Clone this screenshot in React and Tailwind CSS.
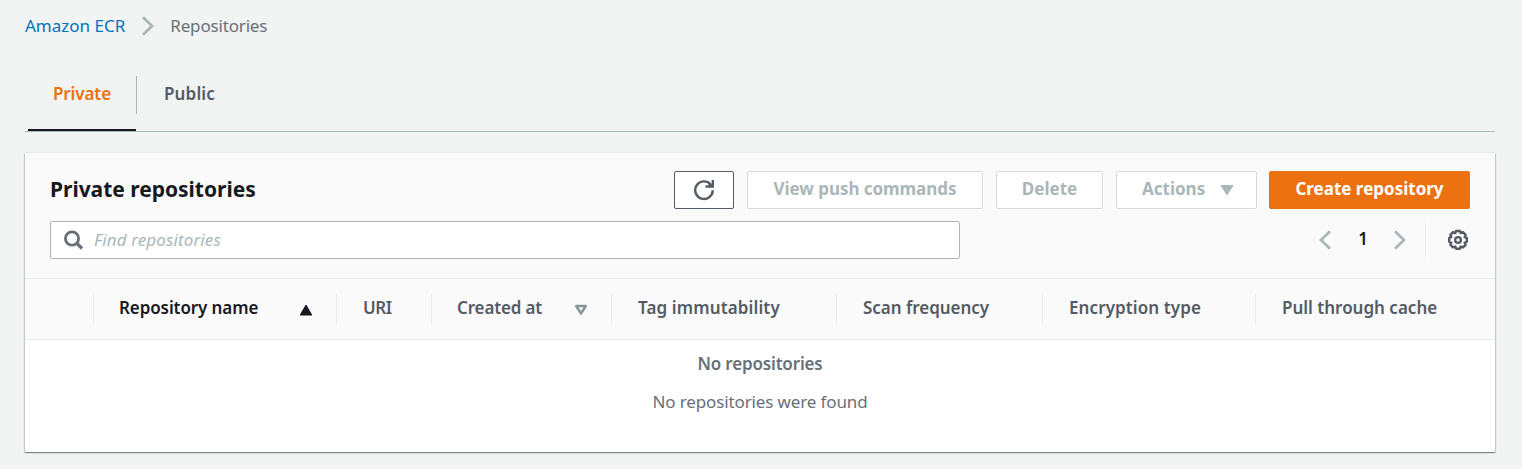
function Chevron({ left = false, className = "" }) {
  return (
    <svg className={className} width="13" height="20" viewBox="0 0 13 20" fill="none" stroke="#aab7b8" strokeWidth="2.7">
      <path d={left ? "M11 1.300 2 10l9 8.700" : "M1 1.300 10 10l-9 8.700"} />
    </svg>
  );
}

function Refresh() {
  return (
    <svg width="22" height="22" viewBox="0 0 22 22" fill="none" stroke="#545b64" strokeWidth="2.4">
      <path d="M19.800 11.300A8.800 8.800 0 1 1 17.500 5.200" />
      <path d="M19.800 1v6.500h-7.300M15.500 4l3.500 3.500" />
    </svg>
  );
}

function Search() {
  return (
    <svg width="20" height="20" viewBox="0 0 20 20" fill="none" stroke="#687078" strokeWidth="2.8">
      <circle cx="8" cy="8.500" r="6.600" />
      <path d="M12.700 13.200l5.300 5.300" strokeWidth="3.300" />
    </svg>
  );
}

function Gear() {
  return (
    <svg width="24" height="24" viewBox="0 0 22 22" fill="none" stroke="#545b64" strokeWidth="2.200" strokeLinejoin="round">
      <path d="M9.200 2.700h3.600l.7 2 2-.9 2.500 2.500-.9 2 2 .7v3.600l-2 .8.9 2-2.500 2.400-2-.8-.7 2H9.200l-.7-2-2 .8L4 15.400l.9-2-2-.8V9l2-.7-.9-2 2.500-2.500 2 .9z" />
      <circle cx="11" cy="11" r="2.600" />
    </svg>
  );
}

function SortUp() {
  return (
    <svg width="14" height="12" viewBox="0 0 14 12" fill="#16191f">
      <path d="M7 1l5.800 10H1.200z" stroke="#16191f" strokeLinejoin="round" />
    </svg>
  );
}

function SortDown() {
  return (
    <svg width="14" height="12" viewBox="0 0 14 12" fill="none" stroke="#879596" strokeWidth="2.500" strokeLinejoin="round">
      <path d="M2.200 2h9.600L7 9.500z" />
    </svg>
  );
}

const button = "flex h-[38px] shrink-0 items-center rounded-[2px] border pb-[3px] font-bold";

const columns = [
  { label: "Repository name", width: "w-[243px]", text: "pl-[25px] text-[#16191f] tracking-[-0.1px]", icon: <SortUp />, gap: "ml-[41px]" },
  { label: "URI", width: "w-[95px]", text: "pl-[26px] tracking-[-0.4px]" },
  { label: "Created at", width: "w-[180px]", text: "pl-[25px] tracking-[-0.15px]", icon: <SortDown />, gap: "ml-[32px]" },
  { label: "Tag immutability", width: "w-[225px]", text: "pl-[26px] tracking-[0.13px]" },
  { label: "Scan frequency", width: "w-[206px]", text: "pl-[26px] tracking-[-0.03px]" },
  { label: "Encryption type", width: "w-[213px]", text: "pl-[26px] tracking-[0.1px]" },
  { label: "Pull through cache", width: "w-[239px]", text: "pl-[26px] tracking-[0px]" },
];

export default function App() {
  return (
    <main className="h-[469px] overflow-hidden bg-[#f2f3f3] pl-[25px] pr-[27px] font-['Noto_Sans',sans-serif] text-[17px] leading-6 text-[#545b64]">
      <nav className="flex h-[52px] items-center">
        <a className="text-[#0073bb]">Amazon ECR</a>
        <Chevron className="ml-[17px]" />
        <span className="ml-[15px] tracking-[-0.17px] text-[#687078]">Repositories</span>
      </nav>

      <div className="flex h-[80px] items-end border-b border-[#aab7b8] pl-[3px] font-semibold">
        <div className="flex h-[55px] w-[108px] justify-center border-b-2 border-[#16191f] pt-[6px] tracking-[-0.1px] text-[#ec7211]">Private</div>
        <div className="mt-[24px] h-[38px] w-px self-start bg-[#aab7b8]" />
        <div className="h-[55px] pl-[27px] pt-[6px] tracking-[0.15px]">Public</div>
      </div>

      <section className="mt-[21px] h-[299px] w-[1470px] bg-white shadow-[0_-1px_0_0_#eaeded,0_1px_1px_0_rgba(0,28,36,0.3),1px_1px_1px_0_rgba(0,28,36,0.15),-1px_1px_1px_0_rgba(0,28,36,0.15)]">
        <div className="h-[126px] border-b border-[#eaeded] bg-[#fafafa] px-[25px] pt-[18px]">
          <div className="flex h-[38px] items-center">
            <h2 className="mr-auto pb-[3px] text-[21px] font-bold tracking-[-0.02px] text-[#16191f]">Private repositories</h2>
            <button className={`${button} mr-[13px] w-[60px] justify-center border-[#545b64] bg-white pt-[3px]`}><Refresh /></button>
            <button className={`${button} mr-[13px] w-[236px] justify-center border-[#d5dbdb] bg-white tracking-[-0.05px] text-[#aab7b8]`}>View push commands</button>
            <button className={`${button} mr-[13px] w-[107px] justify-center border-[#d5dbdb] bg-white text-[#aab7b8]`}>Delete</button>
            <button className={`${button} mr-3 w-[141px] border-[#d5dbdb] bg-white pl-[25px] text-[#aab7b8]`}>
              Actions
              <svg className="ml-[15px] mt-[3px]" width="14" height="12" viewBox="0 0 14 12" fill="#aab7b8" stroke="#aab7b8" strokeLinejoin="round"><path d="M1 1.500h12L7 10.800z" /></svg>
            </button>
            <button className={`${button} w-[201px] justify-center border-[#ec7211] bg-[#ec7211] text-white`}>Create repository</button>
          </div>
          <div className="mt-3 flex h-[38px] items-center">
            <div className="flex h-[38px] w-[910px] items-center rounded-[2px] border border-[#aab7b8] bg-white pl-[13px]">
              <Search />
              <span className="ml-[10px] italic tracking-[0.12px] text-[#aab7b8]">Find repositories</span>
            </div>
            <Chevron left className="ml-[359px]" />
            <span className="w-[62px] pb-0.5 text-center font-semibold text-[#16191f]">1</span>
            <Chevron />
            <div className="ml-[18px] h-[38px] w-px bg-[#eaeded]" />
            <div className="ml-5"><Gear /></div>
          </div>
        </div>

        <div className="flex h-[61px] items-center border-b border-[#eaeded] bg-[#fafafa] pl-[68px] font-semibold">
          {columns.map((c) => (
            <div key={c.label} className={`flex h-[30px] shrink-0 items-center whitespace-nowrap border-l border-[#eaeded] pb-[3px] ${c.width} ${c.text}`}>
              {c.label}
              {c.icon && <span className={`${c.gap} mt-[5px] flex`}>{c.icon}</span>}
            </div>
          ))}
        </div>

        <div className="pt-3 text-center text-[#687078]">
          <p className="font-semibold tracking-[-0.17px]">No repositories</p>
          <p className="mt-[14px] tracking-[-0.13px]">No repositories were found</p>
        </div>
      </section>
    </main>
  );
}
